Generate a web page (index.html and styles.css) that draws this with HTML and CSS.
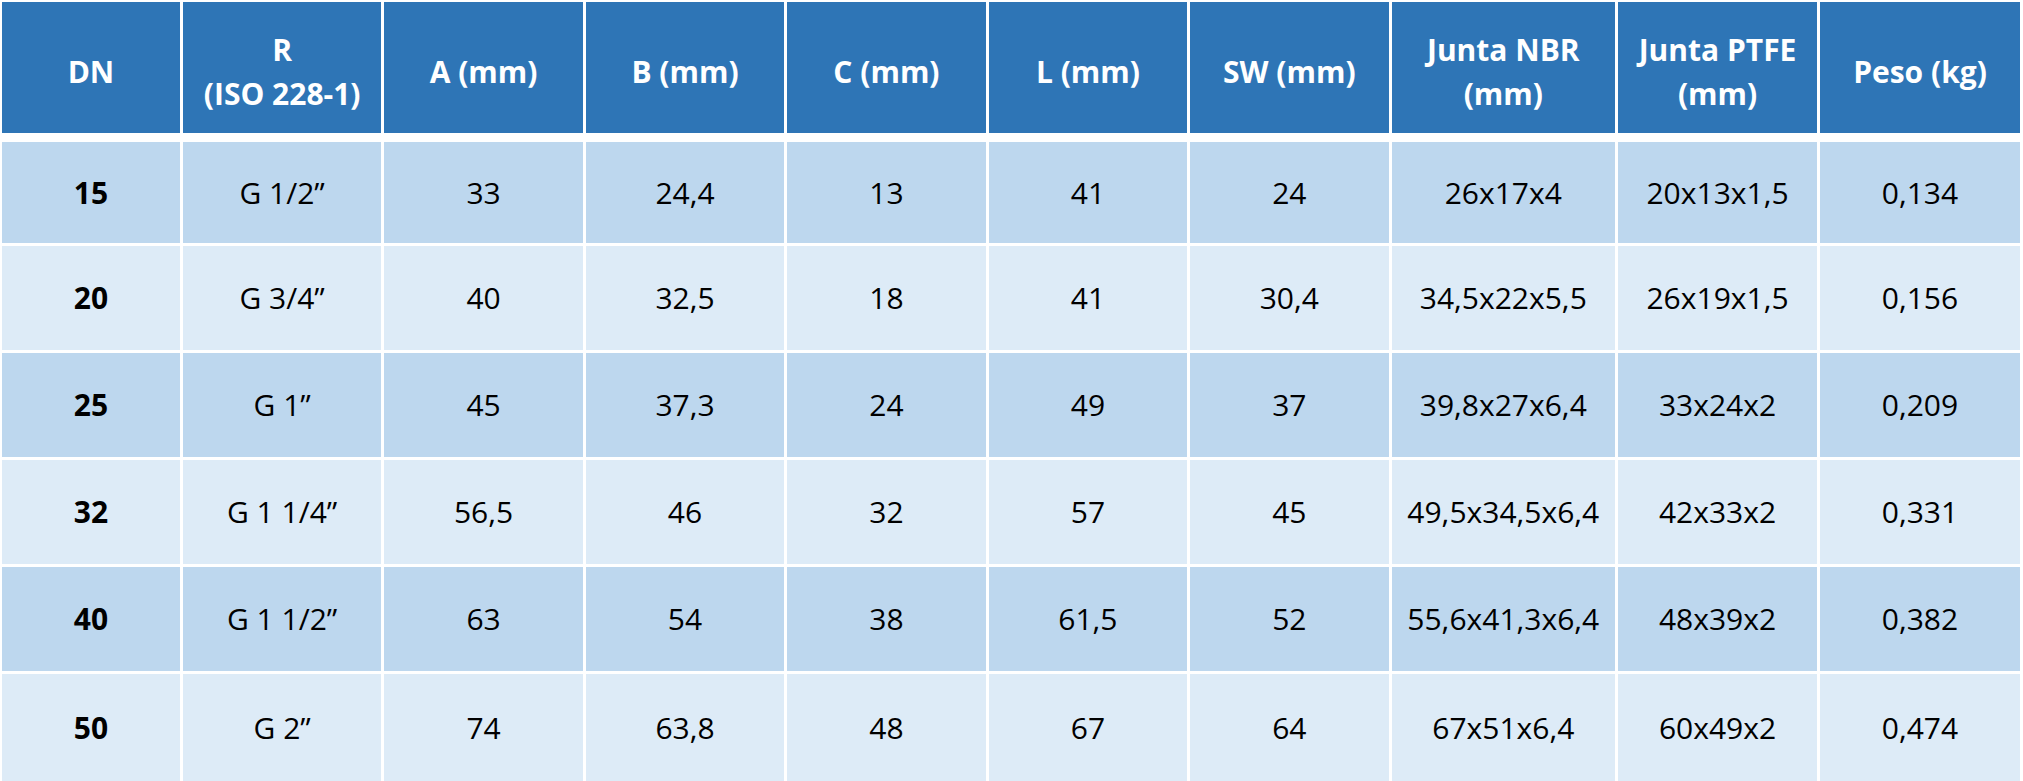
FILE: index.html
```html
<!DOCTYPE html>
<html lang="es">
<head>
    <meta charset="UTF-8">
    <meta name="viewport" content="width=device-width, initial-scale=1.0">
    <title>Dimensiones DN 15 - 50</title>
    <link rel="stylesheet" href="styles.css">
</head>
<body>
    <table class="dim-table">
        <colgroup>
            <col class="col-dn">
            <col class="col-std">
            <col class="col-std">
            <col class="col-std">
            <col class="col-std">
            <col class="col-std">
            <col class="col-std">
            <col class="col-wide">
            <col class="col-ptfe">
            <col class="col-peso">
        </colgroup>
        <thead>
            <tr>
                <th>DN</th>
                <th>R<br>(ISO 228-1)</th>
                <th>A (mm)</th>
                <th>B (mm)</th>
                <th>C (mm)</th>
                <th>L (mm)</th>
                <th>SW (mm)</th>
                <th>Junta NBR<br>(mm)</th>
                <th>Junta PTFE<br>(mm)</th>
                <th>Peso (kg)</th>
            </tr>
        </thead>
        <tbody>
            <tr class="row-first">
                <td class="dn">15</td><td>G 1/2”</td><td>33</td><td>24,4</td><td>13</td>
                <td>41</td><td>24</td><td>26x17x4</td><td>20x13x1,5</td><td>0,134</td>
            </tr>
            <tr>
                <td class="dn">20</td><td>G 3/4”</td><td>40</td><td>32,5</td><td>18</td>
                <td>41</td><td>30,4</td><td>34,5x22x5,5</td><td>26x19x1,5</td><td>0,156</td>
            </tr>
            <tr>
                <td class="dn">25</td><td>G 1”</td><td>45</td><td>37,3</td><td>24</td>
                <td>49</td><td>37</td><td>39,8x27x6,4</td><td>33x24x2</td><td>0,209</td>
            </tr>
            <tr>
                <td class="dn">32</td><td>G 1 1/4”</td><td>56,5</td><td>46</td><td>32</td>
                <td>57</td><td>45</td><td>49,5x34,5x6,4</td><td>42x33x2</td><td>0,331</td>
            </tr>
            <tr>
                <td class="dn">40</td><td>G 1 1/2”</td><td>63</td><td>54</td><td>38</td>
                <td>61,5</td><td>52</td><td>55,6x41,3x6,4</td><td>48x39x2</td><td>0,382</td>
            </tr>
            <tr class="row-last">
                <td class="dn">50</td><td>G 2”</td><td>74</td><td>63,8</td><td>48</td>
                <td>67</td><td>64</td><td>67x51x6,4</td><td>60x49x2</td><td>0,474</td>
            </tr>
        </tbody>
    </table>
</body>
</html>
```

FILE: styles.css
```css
html {
    overflow: hidden;
}

body {
    font-family: 'Open Sans', 'Noto Sans', sans-serif;
    background-color: #fff;
    color: #000;
    margin: 0;
    padding: 0;
}

.dim-table {
    border-collapse: separate;
    border-spacing: 3px;
    table-layout: fixed;
    margin: -1px 0 0 -1px;
    font-size: 30px;
    text-align: center;
}

.col-dn { width: 178px; }
.col-std { width: 198.5px; }
.col-wide { width: 223.5px; }
.col-ptfe { width: 199px; }
.col-peso { width: 200px; }

.dim-table th,
.dim-table td {
    padding: 0;
    vertical-align: middle;
    line-height: 44px;
}

.dim-table thead tr {
    height: 137px;
}

.dim-table th {
    background-color: #2e75b6;
    background-clip: padding-box;
    border-bottom: 6px solid #fff;
    color: #fff;
    font-weight: bold;
    padding-top: 9px;
}

.dim-table tbody tr {
    height: 104px;
}

.dim-table tbody tr.row-first {
    height: 101px;
}

.dim-table tbody tr.row-last {
    height: 107px;
}

.dim-table tbody tr:nth-child(odd) td {
    background-color: #bdd7ee;
}

.dim-table tbody tr:nth-child(even) td {
    background-color: #ddebf7;
}

.dim-table td.dn {
    font-weight: bold;
}
```
